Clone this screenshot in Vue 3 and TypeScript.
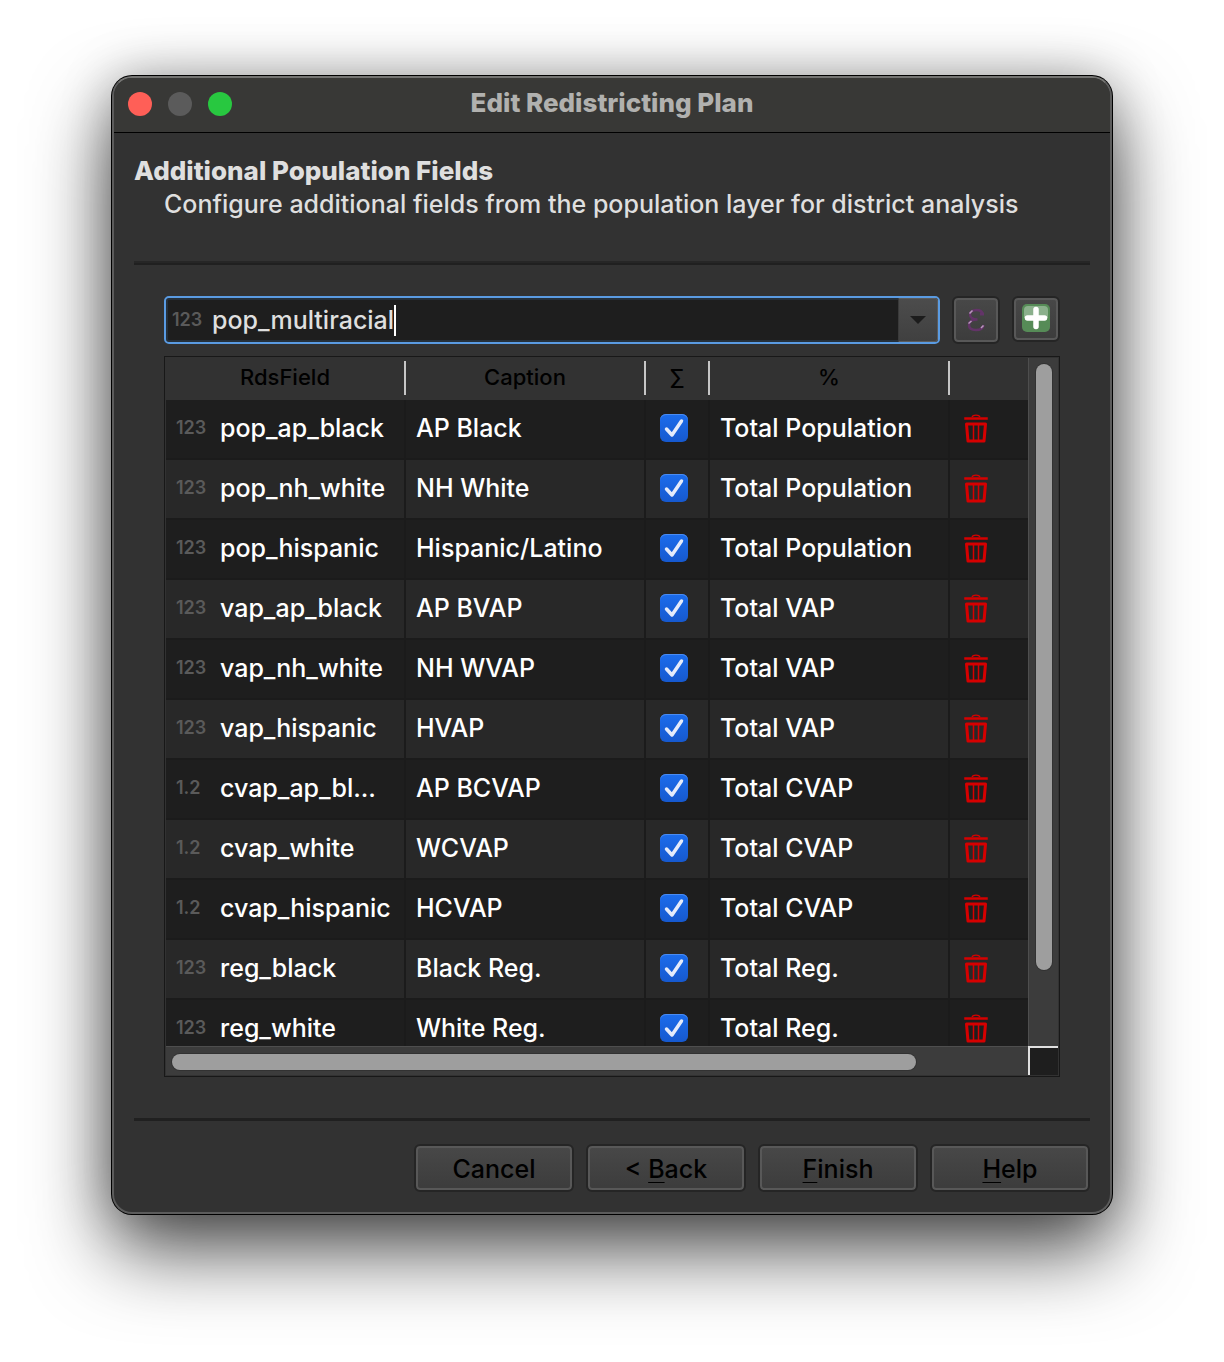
<script setup lang="ts">
import { ref } from 'vue'

interface FieldRow {
  kind: '123' | '1.2'
  field: string
  caption: string
  sum: boolean
  percent: string
}

const search = ref('pop_multiracial')

const rows = ref<FieldRow[]>([
  { kind: '123', field: 'pop_ap_black', caption: 'AP Black', sum: true, percent: 'Total Population' },
  { kind: '123', field: 'pop_nh_white', caption: 'NH White', sum: true, percent: 'Total Population' },
  { kind: '123', field: 'pop_hispanic', caption: 'Hispanic/Latino', sum: true, percent: 'Total Population' },
  { kind: '123', field: 'vap_ap_black', caption: 'AP BVAP', sum: true, percent: 'Total VAP' },
  { kind: '123', field: 'vap_nh_white', caption: 'NH WVAP', sum: true, percent: 'Total VAP' },
  { kind: '123', field: 'vap_hispanic', caption: 'HVAP', sum: true, percent: 'Total VAP' },
  { kind: '1.2', field: 'cvap_ap_bl...', caption: 'AP BCVAP', sum: true, percent: 'Total CVAP' },
  { kind: '1.2', field: 'cvap_white', caption: 'WCVAP', sum: true, percent: 'Total CVAP' },
  { kind: '1.2', field: 'cvap_hispanic', caption: 'HCVAP', sum: true, percent: 'Total CVAP' },
  { kind: '123', field: 'reg_black', caption: 'Black Reg.', sum: true, percent: 'Total Reg.' },
  { kind: '123', field: 'reg_white', caption: 'White Reg.', sum: true, percent: 'Total Reg.' },
])

function removeRow(index: number) {
  rows.value.splice(index, 1)
}
</script>

<template>
  <div class="desktop">
    <main class="window">
      <header class="titlebar">
        <div class="lights">
          <button class="light close" type="button" aria-label="Close"></button>
          <button class="light minimize" type="button" aria-label="Minimize"></button>
          <button class="light zoom" type="button" aria-label="Zoom"></button>
        </div>
        <div class="window-title">Edit Redistricting Plan</div>
      </header>

      <div class="page">
        <h1>Additional Population Fields</h1>
        <p class="subtitle">Configure additional fields from the population layer for district analysis</p>
        <div class="rule top"></div>

        <section class="group">
          <div class="toolbar">
            <div class="combo">
              <span class="kind">123</span>
              <input v-model="search" class="combo-input" type="text" aria-label="Population field" />
              <span class="caret"></span>
              <button class="combo-arrow" type="button" aria-label="Show fields">
                <svg width="16" height="8" viewBox="0 0 16 8"><path d="M0 0H16L8 8Z" fill="#1c1c1c" /></svg>
              </button>
            </div>
            <button class="push tool" type="button" aria-label="Expression">
              <svg width="20" height="24" viewBox="0 0 20 24" fill="none">
                <path d="M16.500 6C16 3 13.500 2 10.500 2C6.500 2 4 4 4 6.500C4 9.500 7 11.500 11.500 11.500C6 11.500 3 13.500 3 17C3 20.500 6 22 10 22C14 22 17 20.500 17.500 17" stroke="#633468" stroke-width="2.500" />
                <path d="M14 6H18" stroke="#633468" stroke-width="3" />
                <path d="M3.500 5.500L6.500 2.500M2.500 15.500L5.500 13M15 20L17.500 17.500" stroke="#b99abd" stroke-width="1.500" />
              </svg>
            </button>
            <button class="push tool add" type="button" aria-label="Add field">
              <svg width="28" height="28" viewBox="0 0 28 28">
                <rect width="28" height="28" rx="5" fill="#568b57" />
                <path d="M2 14V6Q2 2 6 2H22Q26 2 26 6V14Z" fill="#8bb08c" />
                <path d="M14 5.500V22.500M5.500 14H22.500" stroke="#fff" stroke-width="5.500" stroke-linecap="round" />
              </svg>
            </button>
          </div>

          <div class="frame">
            <div class="viewport">
              <table>
                <colgroup>
                  <col class="c-field" /><col class="c-caption" /><col class="c-sum" /><col class="c-percent" /><col />
                </colgroup>
                <thead>
                  <tr>
                    <th><span>RdsField</span></th>
                    <th><span>Caption</span></th>
                    <th><span>∑</span></th>
                    <th><span>%</span></th>
                    <th></th>
                  </tr>
                </thead>
                <tbody>
                  <tr v-for="(row, i) in rows" :key="row.field">
                    <td>
                      <div class="field"><span class="kind">{{ row.kind }}</span><span>{{ row.field }}</span></div>
                    </td>
                    <td>{{ row.caption }}</td>
                    <td>
                      <div class="check">
                        <input v-model="row.sum" type="checkbox" :aria-label="`Sum ${row.field}`" />
                        <svg v-if="row.sum" width="28" height="28" viewBox="0 0 28 28" fill="none">
                          <path d="M6.500 15L12 21L21.500 7" stroke="#e4ebfb" stroke-width="3.500" stroke-linecap="round" stroke-linejoin="round" />
                        </svg>
                      </div>
                    </td>
                    <td>{{ row.percent }}</td>
                    <td>
                      <button class="trash" type="button" :aria-label="`Remove ${row.field}`" @click="removeRow(i)">
                        <svg width="24" height="30" viewBox="0 0 24 30" fill="none" stroke="#d60000">
                          <path d="M8 3C9 0.500 15 0.500 16 3" stroke-width="1.200" />
                          <path d="M1.500 4.500H22.500" stroke-width="2.500" stroke-linecap="square" />
                          <path d="M2.500 10H21.500L20 27H4Z" stroke-width="3" stroke-linejoin="round" />
                          <path d="M9.500 10V27M14.500 10V27" stroke-width="1.500" />
                        </svg>
                      </button>
                    </td>
                  </tr>
                </tbody>
              </table>
            </div>
            <div class="vbar"><div class="vthumb"></div></div>
            <div class="hbar"><div class="hthumb"></div></div>
            <div class="corner"></div>
          </div>
        </section>

        <div class="rule bottom"></div>
        <footer class="actions">
          <button class="push" type="button">Cancel</button>
          <button class="push" type="button">&lt; <u>B</u>ack</button>
          <button class="push" type="button"><u>F</u>inish</button>
          <button class="push" type="button"><u>H</u>elp</button>
        </footer>
      </div>
    </main>
  </div>
</template>

<style>
body {
  margin: 0;
  background: #fff;
}
</style>

<style scoped>
.desktop {
  box-sizing: border-box;
  min-height: 100vh;
  padding: 76px 112px 148px;
  overflow: hidden;
  font-family: Inter, "Liberation Sans", sans-serif;
  font-size: 25px;
  font-weight: 500;
  color: #dfdfdf;
}
.window {
  border: 2px solid #5c5c5c;
  border-top-color: #747472;
  border-radius: 20px;
  background: #323232;
  box-shadow: 0 0 0 1px #000, 0 36px 80px rgba(0, 0, 0, 0.7), 0 0 50px rgba(0, 0, 0, 0.25);
}
button {
  padding: 0;
  border: 0;
  font: inherit;
}
.titlebar {
  display: grid;
  grid-template-columns: 1fr auto 1fr;
  align-items: center;
  height: 54px;
  padding: 0 14px;
  border-bottom: 1px solid #000;
  border-radius: 18px 18px 0 0;
  background: #383836;
}
.lights {
  display: flex;
  gap: 16px;
}
.light {
  width: 24px;
  height: 24px;
  margin-bottom: 2px;
  border-radius: 50%;
}
.close { background: #ff5f57; }
.minimize { background: #5b5b5b; }
.zoom { background: #28c840; }
.window-title {
  padding-bottom: 5px;
  color: #b1b1af;
  font-size: 26px;
  font-weight: 800;
}
.page {
  padding: 21px 20px 20px;
}
h1, .subtitle {
  margin: 0;
}
h1 {
  font-size: 26px;
  font-weight: 800;
  line-height: 34px;
}
.subtitle {
  padding-left: 30px;
  line-height: 33px;
}
.rule {
  background: #202020;
}
.rule.top {
  height: 2px;
  margin: 40px 0 31px;
  border-top: 2px solid #262626;
}
.rule.bottom {
  height: 3px;
  margin: 41px 0 23px;
}
.group {
  margin: 0 30px;
}
.toolbar {
  display: flex;
  gap: 12px;
  margin-bottom: 12px;
}
.combo {
  display: flex;
  align-items: center;
  flex: 1;
  box-sizing: border-box;
  height: 48px;
  padding-left: 6px;
  border: 2px solid #5a9be2;
  border-radius: 5px;
  background: #1e1e1e;
  box-shadow: inset 0 0 0 2px #26303a;
}
.kind {
  flex: none;
  width: 40px;
  padding-bottom: 2px;
  color: #5a5a5a;
  font-size: 18px;
  font-weight: 600;
}
.combo-input {
  field-sizing: content;
  min-width: 0;
  padding: 0;
  border: 0;
  outline: 0;
  background: none;
  color: #dfdfdf;
  font: inherit;
}
.caret {
  width: 2px;
  height: 31px;
  background: #fff;
}
.combo-arrow {
  display: grid;
  place-items: center;
  width: 40px;
  height: 44px;
  margin-left: auto;
  border: 1px solid #5c5c5c;
  border-left-color: #3a3a3a;
  border-radius: 0 3px 3px 0;
  background: linear-gradient(#4c4c4c, #404040);
}
.push {
  box-sizing: border-box;
  width: 160px;
  height: 48px;
  border: 2px solid #252525;
  border-radius: 6px;
  background: linear-gradient(#484848, #3c3c3c);
  box-shadow: inset 0 0 0 2px #585858;
  color: #000;
}
.push u {
  text-decoration-thickness: 1px;
  text-underline-offset: 4px;
}
.actions .push {
  padding-top: 2px;
}
.tool {
  display: grid;
  place-items: center;
  width: 48px;
}
.add {
  height: 46px;
  padding-bottom: 2px;
}
.frame {
  display: grid;
  grid-template-columns: 1fr 30px;
  grid-template-rows: 688px 29px;
  padding: 1px;
  border: 1px solid #181818;
}
.viewport {
  overflow: hidden;
}
table {
  width: 100%;
  border-collapse: separate;
  border-spacing: 0;
  table-layout: fixed;
}
.c-field, .c-caption, .c-percent { width: 240px; }
.c-sum { width: 64px; }
th {
  height: 40px;
  padding: 0 0 2px;
  color: #000;
  font-size: 22px;
  font-weight: 500;
}
th span {
  display: block;
  height: 34px;
  border-right: 2px solid #c6c6c6;
  line-height: 32px;
}
td {
  box-sizing: border-box;
  height: 60px;
  padding: 0 0 2px 10px;
  border-right: 2px solid #1b1b1b;
  border-bottom: 2px solid #1b1b1b;
  background: #1e1e1e;
  color: #fff;
  white-space: nowrap;
}
td:last-child {
  padding-bottom: 0;
  border-right: 0;
}
tr:nth-child(even) td { background: #282828; }
.field {
  display: flex;
  align-items: center;
}
.field .kind {
  width: 44px;
}
.check {
  display: grid;
  width: 28px;
  margin-left: 4px;
}
.check > * {
  grid-area: 1 / 1;
}
.check input {
  appearance: none;
  width: 28px;
  height: 28px;
  margin: 0;
  border-radius: 6px;
  background: #3a3a3a;
}
.check input:checked {
  background: linear-gradient(#1b6cec, #1659cf);
  box-shadow: inset 0 1px 0 #4a8cf2;
}
.check svg {
  pointer-events: none;
}
.trash {
  display: block;
  height: 30px;
  margin-left: 4px;
  background: none;
}
.trash svg, .check svg {
  display: block;
}
.vbar, .hbar {
  display: flex;
  box-sizing: border-box;
  padding: 6px;
  background: #3c3c3c;
}
.vbar {
  flex-direction: column;
  align-items: center;
  border-left: 1px solid #4e4e4e;
}
.hbar {
  padding-top: 7px;
  border-top: 1px solid #4e4e4e;
}
.vthumb, .hthumb {
  border-radius: 8px;
  background: #9e9e9e;
  box-shadow: 0 0 0 1px #323232;
}
.vthumb {
  width: 16px;
  height: 606px;
}
.hthumb {
  width: 744px;
  height: 16px;
}
.corner {
  border-top: 2px solid #e0e0e0;
  border-left: 2px solid #e0e0e0;
  background: #1e1e1e;
}
.actions {
  display: flex;
  justify-content: flex-end;
  gap: 12px;
}
</style>
